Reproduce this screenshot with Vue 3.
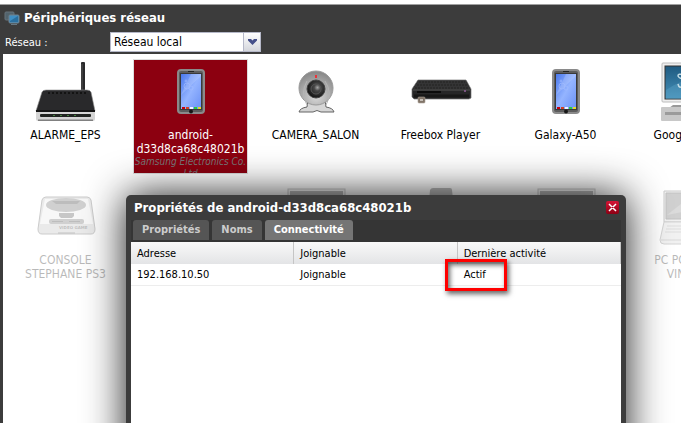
<template>
  <div class="page">
    <header class="panel-header">
      <h1 class="panel-title">
        <svg class="title-icon" viewBox="0 0 16 16">
          <rect x="1" y="2" width="9" height="8" rx="1" fill="#52636c" stroke="#66737b" />
          <rect x="5" y="5" width="10" height="8" rx="1" fill="#3f8fc4" stroke="#70818c" />
          <path d="M6 11L14 6V12H6Z" fill="#2a6f9f" />
          <path d="M7 14.5H13" stroke="#687780" />
        </svg>
        Périphériques réseau
      </h1>
      <div class="toolbar">
        <label for="network">Réseau :</label>
        <div class="combo">
          <select id="network" v-model="network">
            <option>Réseau local</option>
            <option>Réseau invité</option>
          </select>
          <span class="combo-arrow">
            <svg viewBox="0 0 9 6"><path d="M0 0H3L4.5 1.5L6 0H9V1.5L4.5 6L0 1.5Z" fill="#45508a" /></svg>
          </span>
        </div>
      </div>
    </header>

    <main class="devices">
      <div
        v-for="device in devices"
        :key="device.id"
        class="device"
        :class="{ selected: device.id === selected, offline: device.offline }"
        @click="selected = device.id"
      >
        <svg v-if="device.type === 'router'" class="device-icon" viewBox="0 0 64 64">
          <rect x="47" y="1" width="4" height="32" rx="1" fill="#29292b" />
          <path d="M48 3V30" stroke="#555" />
          <path d="M8 31Q9 29 12 29H53Q56 29 57 31L61 50H2Z" fill="#29292b" stroke="#8e8e8e" stroke-width=".6" />
          <path d="M14 32H53" stroke="#0d0d0d" stroke-width="1.5" stroke-dasharray="2 2" />
          <path d="M2 49H61V58Q61 60 59 60H4Q2 60 2 58Z" fill="#d5d5d5" />
          <path d="M2 49H61V51H2Z" fill="#151515" />
          <rect x="6" y="53" width="51" height="3" rx="1" fill="#202320" />
          <path d="M19 54.5H45" stroke="#43803c" stroke-dasharray="2 5" />
          <path d="M4 58.5H59V60H4Z" fill="#808080" />
        </svg>

        <svg v-else-if="device.type === 'phone'" class="device-icon" viewBox="0 0 64 64">
          <defs>
            <linearGradient :id="'screen' + device.id" x1="0" y1="0" x2="1" y2="1">
              <stop offset="0" stop-color="#4a78ec" />
              <stop offset=".5" stop-color="#94b4ff" />
              <stop offset="1" stop-color="#6a90f5" />
            </linearGradient>
          </defs>
          <rect x="19" y="9" width="26" height="43" rx="3" fill="#5c5c5c" stroke="#8a8a8a" stroke-width="2" />
          <rect x="21" y="12" width="22" height="37" fill="#3a3a3a" />
          <rect x="22" y="13" width="20" height="35" :fill="'url(#screen' + device.id + ')'" />
          <path d="M22 34L42 15V13H32Z" fill="#c7d8ff" opacity=".3" />
          <g fill="none" stroke="#a2bcff" stroke-width=".7">
            <circle cx="28" cy="25" r="3" /><circle cx="32" cy="27" r="2" /><circle cx="27" cy="20" r="1" />
          </g>
          <path d="M29 10.5H35" stroke="#242424" />
          <path d="M23 46H26V48H23Z" fill="#c7000b" />
          <path d="M27 46H30V48H27Z" fill="#d34121" />
          <path d="M31 46H34V48H31Z" fill="#f2f2ff" />
          <path d="M35 46H38V48H35Z" fill="#28cc40" />
          <path d="M39 46H42V48H39Z" fill="#e6da24" />
          <circle cx="32" cy="50.5" r="2" fill="#161616" />
        </svg>

        <svg v-else-if="device.type === 'camera'" class="device-icon" viewBox="0 0 64 64">
          <defs>
            <radialGradient id="cam" cx=".5" cy=".75" r=".7">
              <stop offset="0" stop-color="#d9d9d9" />
              <stop offset="1" stop-color="#8a8a8a" />
            </radialGradient>
            <radialGradient id="lens" cx=".58" cy=".42" r=".6">
              <stop offset="0" stop-color="#a6a6a6" />
              <stop offset=".3" stop-color="#474747" />
              <stop offset="1" stop-color="#111" />
            </radialGradient>
          </defs>
          <path d="M24 39L23 46Q16 47 15 51H29Q33 48 37 51H50Q49 47 42 46L41 39Z" fill="#d6d6d6" stroke="#656565" />
          <circle cx="32" cy="27" r="17" fill="url(#cam)" stroke="#999" />
          <path d="M23 20Q16 32 23 44M41 20Q49 32 42 44" fill="none" stroke="#b5b5b5" />
          <circle cx="32" cy="28" r="9" fill="url(#lens)" stroke="#444" />
          <circle cx="32" cy="28" r="5" fill="none" stroke="#555" />
          <path d="M31 14H33V17H31Z" fill="#e9343b" />
        </svg>

        <svg v-else-if="device.type === 'player'" class="device-icon" viewBox="0 0 64 64">
          <path d="M9 19H57L62 28V37L60 38H5L3 36V28Z" fill="#262627" stroke="#777" stroke-width=".7" />
          <path d="M9 20H57L61 28H4Z" fill="#343435" />
          <path d="M10 21H56M8 24H58M6 27H60" stroke="#222" stroke-dasharray="2 1" />
          <path d="M4 29H61" stroke="#555" />
          <path d="M8 31H32" stroke="#0b0b0b" stroke-width="2" />
          <path d="M5 35H60" stroke="#171717" stroke-width="3" />
          <circle cx="56" cy="30" r="1" fill="#93609b" />
          <rect x="9" y="36" width="7" height="6" rx="1" fill="#817468" stroke="#aaa096" stroke-width=".6" />
          <path d="M11 38H14V40H11Z" fill="#c6bfb8" />
        </svg>

        <svg v-else-if="device.type === 'desktop'" class="device-icon" viewBox="0 0 64 64">
          <defs>
            <linearGradient :id="'desk' + device.id" x1="0" y1="0" x2="0" y2="1">
              <stop offset="0" stop-color="#1f5a80" />
              <stop offset="1" stop-color="#4591ba" />
            </linearGradient>
          </defs>
          <rect x="3" y="2" width="58" height="39" rx="1" fill="#eee" stroke="#bcbcbc" />
          <rect x="6" y="5" width="53" height="33" :fill="'url(#desk' + device.id + ')'" stroke="#333" />
          <path d="M7 29Q25 15 58 17V38H7Z" fill="#6aaed0" opacity=".3" />
          <path d="M24 14Q19 12 19 15Q21 19 25 16M19 23Q20 28 24 25L28 20" fill="none" stroke="#c0dae4" stroke-width="1.5" />
          <path d="M14 44H50V47H10Z" fill="#999" />
          <rect x="2" y="46" width="60" height="14" rx="1" fill="#c8c8c8" />
          <path d="M6 51H58V54H6Z" fill="#9b9b9b" />
        </svg>

        <svg v-else-if="device.type === 'console'" class="device-icon" viewBox="0 0 64 64">
          <path d="M8 14Q9 11 12 11H53Q56 11 57 14L61 43Q61 48 57 48H8Q4 48 4 43Z" fill="#b5b5b5" stroke="#444" />
          <path d="M11 13H54L59 38H6Z" fill="#e9e9e9" />
          <ellipse cx="32" cy="19" rx="20" ry="7" fill="#555" />
          <path d="M18 15H46L43 18H22Z" fill="#111" />
          <path d="M25 27H40V30L38 32H27L25 30Z" fill="#333" />
          <rect x="15" y="33" width="35" height="5" rx="2" fill="#555" />
          <path d="M18 35.5H29M35 35.5H46" stroke="#111" />
          <text x="25" y="43" class="brand">VIDEO GAME</text>
          <path d="M24 47H41" stroke="#222" />
        </svg>

        <svg v-else-if="device.type === 'laptop'" class="device-icon" viewBox="0 0 64 64">
          <path d="M5 5H56V36H5Z" fill="#ccc" stroke="#444" />
          <path d="M7 7H54V33H7Z" fill="#555" stroke="#222" />
          <path d="M8 29L35 8H53V20Z" fill="#999" opacity=".6" />
          <path d="M5 36H56L61 54Q61 58 57 58H5Q1 58 1 54Z" fill="#ccc" stroke="#666" />
          <path d="M8 40H54M7 43H55M6 46H56" stroke="#aaa" stroke-width="2" />
          <path d="M2 54H60" stroke="#777" />
        </svg>

        <svg v-else-if="device.type === 'box'" class="device-icon" viewBox="0 0 64 64">
          <path d="M21 4Q22 2 24 2H41Q43 2 43 4L47 40H18Z" fill="#111" />
        </svg>

        <svg v-else-if="device.type === 'screen'" class="device-icon" viewBox="0 0 64 64">
          <rect x="4" y="3" width="57" height="38" fill="#ddd" stroke="#444" />
          <rect x="6" y="5" width="53" height="34" fill="#000" />
          <path d="M20 44H44V50H20Z" fill="#999" />
        </svg>

        <div class="device-name">{{ device.name }}</div>
        <div v-if="device.vendor" class="device-vendor">{{ device.vendor }}</div>
      </div>
    </main>

    <section class="dialog" role="dialog" aria-labelledby="dialog-title">
      <div class="dialog-header">
        <h2 id="dialog-title">Propriétés de android-d33d8ca68c48021b</h2>
        <button class="close" type="button" aria-label="Fermer">
          <svg viewBox="0 0 13 13">
            <path d="M3 3L10 10M10 3L3 10" stroke="#fff" stroke-width="1.5" />
            <path d="M5.5 6.5H7.5" stroke="#b50020" />
          </svg>
        </button>
      </div>
      <div class="tabs" role="tablist">
        <button
          v-for="tab in tabs"
          :key="tab"
          type="button"
          role="tab"
          class="tab"
          :class="{ active: tab === activeTab }"
          :aria-selected="tab === activeTab"
          @click="activeTab = tab"
        >{{ tab }}</button>
      </div>
      <div class="dialog-body">
        <table>
          <thead>
            <tr>
              <th>Adresse</th>
              <th>Joignable</th>
              <th>Dernière activité</th>
            </tr>
          </thead>
          <tbody>
            <tr v-for="row in rows" :key="row.address">
              <td>{{ row.address }}</td>
              <td>{{ row.reachable }}</td>
              <td>{{ row.activity }}</td>
            </tr>
          </tbody>
        </table>
      </div>
      <div class="marker"></div>
    </section>
  </div>
</template>

<script setup>
import { ref } from 'vue'

const network = ref('Réseau local')
const selected = ref(2)
const activeTab = ref('Connectivité')

const tabs = ['Propriétés', 'Noms', 'Connectivité']

const devices = [
  { id: 1, type: 'router', name: 'ALARME_EPS' },
  { id: 2, type: 'phone', name: 'android-d33d8ca68c48021b', vendor: 'Samsung Electronics Co. Ltd' },
  { id: 3, type: 'camera', name: 'CAMERA_SALON' },
  { id: 4, type: 'player', name: 'Freebox Player' },
  { id: 5, type: 'phone', name: 'Galaxy-A50' },
  { id: 6, type: 'desktop', name: 'Google-Home' },
  { id: 7, type: 'console', name: 'CONSOLE STEPHANE PS3', offline: true },
  { id: 8, type: 'none', name: '', offline: true },
  { id: 9, type: 'screen', name: '', offline: true },
  { id: 10, type: 'box', name: '', offline: true },
  { id: 11, type: 'screen', name: '', offline: true },
  { id: 12, type: 'laptop', name: 'PC PORTABLE VINCENT', offline: true }
]

const rows = [
  { address: '192.168.10.50', reachable: 'Joignable', activity: 'Actif' }
]
</script>

<style>
body {
  overflow: hidden;
  background: #fff;
}
</style>

<style scoped>
* {
  box-sizing: border-box;
}

.page {
  position: relative;
  height: 100vh;
  padding-top: 4px;
  display: flex;
  flex-direction: column;
  overflow: hidden;
  font-family: Tahoma, "DejaVu Sans Condensed", "DejaVu Sans", sans-serif;
  font-size: 12px;
}

.panel-header {
  height: 50px;
  flex: none;
  background: #3c3c3c;
  border-top: 1px solid #a0a0a0;
  color: #fff;
}

.panel-title {
  display: flex;
  align-items: center;
  gap: 4px;
  height: 25px;
  margin: 0;
  padding-left: 4px;
  font-size: 13px;
}

.title-icon {
  width: 16px;
  height: 16px;
}

.toolbar {
  display: flex;
  align-items: center;
  padding: 2px 0 0 5px;
}

.toolbar label {
  width: 105px;
  font-size: 11px;
}

.combo {
  position: relative;
  width: 151px;
  height: 20px;
}

.combo select {
  appearance: none;
  width: 100%;
  height: 100%;
  padding: 0 20px 0 3px;
  border: 1px solid #b5b8c8;
  border-radius: 0;
  background: #fff;
  color: #000;
  font: inherit;
}

.combo-arrow {
  position: absolute;
  top: 1px;
  right: 1px;
  bottom: 1px;
  width: 17px;
  display: flex;
  align-items: center;
  justify-content: center;
  border-left: 1px solid #b5b8c8;
  background: linear-gradient(#fff, #d4d6dc);
  pointer-events: none;
}

.combo-arrow svg {
  width: 9px;
  height: 6px;
}

.devices {
  flex: 1;
  display: grid;
  grid-template-columns: repeat(6, 115px);
  grid-auto-rows: 115px;
  gap: 10px;
  padding: 5px;
  border-left: 3px solid #3c3c3c;
  overflow: hidden;
}

.device {
  height: 115px;
  padding: 1px 2px;
  border: 1px solid transparent;
  overflow: hidden;
  text-align: center;
  line-height: 14px;
  cursor: pointer;
}

.device.selected {
  background: #8c0010;
  border-color: #ddd;
  color: #fff;
}

.device-icon {
  display: block;
  width: 64px;
  height: 64px;
  margin: 0 0 3px 23px;
}

.device-name {
  overflow-wrap: anywhere;
}

.device-vendor {
  margin: 0 -2px;
  font-size: 10px;
  line-height: 12px;
  font-style: italic;
  color: #777;
}

.offline {
  opacity: 0.27;
}

.brand {
  font: bold 4px "DejaVu Sans", sans-serif;
  fill: #111;
}

.dialog {
  position: absolute;
  top: 195px;
  right: 55px;
  bottom: -60px;
  left: 126px;
  display: flex;
  flex-direction: column;
  padding: 0 5px;
  border-radius: 5px 5px 0 0;
  background: #3c3c3c;
  box-shadow: 0 0 40px rgba(0, 0, 0, 0.9);
}

.dialog-header {
  display: flex;
  align-items: center;
  justify-content: space-between;
  height: 25px;
  padding: 0 2px 0 3px;
}

.dialog-header h2 {
  margin: 0;
  font-size: 13px;
  color: #fff;
}

.close {
  width: 13px;
  height: 13px;
  padding: 0;
  border: 0;
  border-radius: 2px;
  background: linear-gradient(#d51435, #8c0014);
}

.close svg {
  display: block;
}

.tabs {
  display: flex;
  gap: 3px;
  height: 22px;
  padding: 0 2px 2px;
  background: #353535;
}

.tab {
  padding: 0 9px;
  border: 0;
  border-radius: 3px 3px 0 0;
  background: #555;
  color: #ccc;
  font: bold 11px/20px Tahoma, "DejaVu Sans Condensed", sans-serif;
}

.tab.active {
  background: #757575;
  color: #fff;
}

.dialog-body {
  flex: 1;
  background: #fff;
}

table {
  width: 100%;
  border-collapse: separate;
  border-spacing: 0;
  table-layout: fixed;
  font-size: 11px;
}

th,
td {
  height: 22px;
  padding: 0 6px;
  text-align: left;
  font-weight: normal;
}

th {
  border-right: 1px solid #c5c5c5;
  background: linear-gradient(#f9f9f9, #e3e4e6);
}

td {
  border-bottom: 1px solid #ededed;
}

.marker {
  position: absolute;
  top: 64px;
  left: 319px;
  width: 62px;
  height: 32px;
  border: 3px solid #f00;
  box-shadow: 2px 3px 5px rgba(0, 0, 0, 0.6), inset 2px 3px 5px rgba(0, 0, 0, 0.6);
}
</style>
